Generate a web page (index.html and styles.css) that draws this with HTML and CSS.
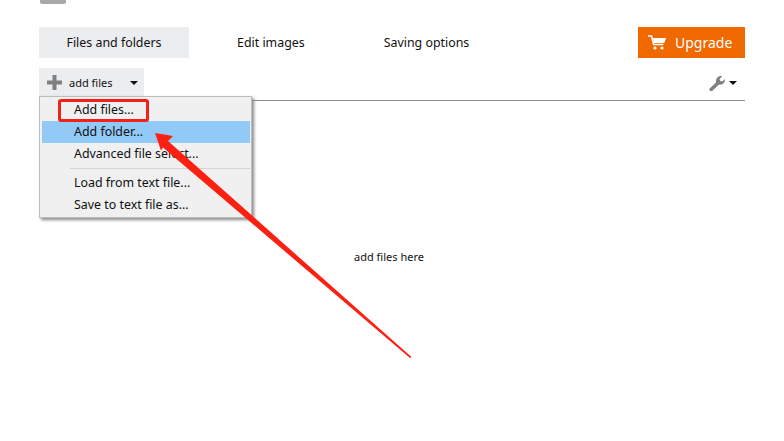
FILE: index.html
```html
<!DOCTYPE html>
<html lang="en">
<head>
    <meta charset="UTF-8">
    <title>Files and folders</title>
    <link rel="stylesheet" href="styles.css">
</head>
<body>
    <div class="container">
        <div class="logo-bit"></div>
        <div class="tabs">
            <div class="tab active">Files and folders</div>
            <div class="tab edit">Edit images</div>
            <div class="tab saving">Saving options</div>
            <div class="upgrade">
                <svg width="19" height="15" viewBox="0 0 19 15">
                    <path d="M0 1h3.500l2.200 8.500h9.600" fill="none" stroke="#fff" stroke-width="1.600"/>
                    <path d="M4.600 3h13.600l-2 5H6z" fill="#fff"/>
                    <circle cx="7" cy="13" r="1.600" fill="#fff"/>
                    <circle cx="14" cy="13" r="1.600" fill="#fff"/>
                </svg>
                <span>Upgrade</span>
            </div>
        </div>
        <div class="toolbar">
            <div class="add-btn">
                <svg class="plus" width="15" height="15" viewBox="0 0 15 15">
                    <path d="M5.500 0h4v5.500H15v4H9.500V15h-4V9.500H0v-4h5.500z" fill="#808080"/>
                </svg>
                <span>add files</span>
                <i class="caret"></i>
            </div>
            <div class="tools">
                <svg width="16" height="16" viewBox="0 0 16 16">
                    <path d="M1 15.500c-.8-.6-1-1.400-.4-2.100L7 7.500C6.500 5 7.500 2.500 9.800 1.500c1.200-.5 2.400-.5 3.300-.1L10.500 4l.8 2 2 .6 2.400-2.500c.4 1.600 0 3.300-1.300 4.500-1.300 1.100-3 1.400-4.500.9l-6.500 6.200c-.7.600-1.600.8-2.400.3z" fill="#808080"/>
                </svg>
                <i class="caret"></i>
            </div>
        </div>
        <div class="drop-area">add files here</div>

        <div class="menu">
            <div class="menu-item">Add files...</div>
            <div class="menu-item selected">Add folder...</div>
            <div class="menu-item">Advanced file select...</div>
            <div class="menu-sep"></div>
            <div class="menu-item">Load from text file...</div>
            <div class="menu-item">Save to text file as...</div>
        </div>

        <!-- annotation on top of the screenshot -->
        <div class="red-box"></div>
        <svg class="arrow" width="784" height="441" viewBox="0 0 784 441">
            <polygon points="155,133 173,136 168,141 411.500,357 410,358 163,147.500 161,150.500" fill="#fb2012"/>
        </svg>
    </div>
</body>
</html>
```

FILE: styles.css
```css
body {
    margin: 0;
    background-color: #fff;
    color: #111;
    font-family: "Noto Sans", "Open Sans", sans-serif;
    font-size: 12px;
}

.container {
    position: relative;
    width: 784px;
    height: 441px;
    overflow: hidden;
    padding: 0 39px;
    box-sizing: border-box;
}

.logo-bit {
    width: 26px;
    height: 4px;
    background-color: #a9a9a9;
    border-radius: 0 0 2px 2px;
    margin-left: 1px;
}

/* 顶部标签 */
.tabs {
    display: flex;
    align-items: stretch;
    height: 31px;
    margin-top: 23px;
}

.tab {
    display: flex;
    align-items: center;
    justify-content: center;
    font-size: 12.4px;
}

.tab.active {
    width: 150px;
    background-color: #ecedef;
}

.tab.edit {
    margin-left: 48px;
}

.tab.saving {
    margin-left: 79px;
}

.upgrade {
    display: flex;
    align-items: center;
    gap: 8px;
    width: 107px;
    box-sizing: border-box;
    padding-left: 10px;
    margin-left: auto;
    background-color: #f06800;
    color: #fff;
    font-size: 14px;
}

/* 工具栏 */
.toolbar {
    display: flex;
    justify-content: space-between;
    height: 32px;
    margin-top: 10px;
    border-bottom: 1px solid #8c8c8c;
}

.add-btn {
    display: flex;
    align-items: center;
    width: 105px;
    height: 29px;
    box-sizing: border-box;
    padding-left: 8px;
    background-color: #ecedef;
    font-size: 11px;
}

.add-btn span {
    margin-left: 7px;
}

.add-btn .caret {
    margin-left: 17px;
}

.caret {
    width: 0;
    height: 0;
    border-left: 4px solid transparent;
    border-right: 4px solid transparent;
    border-top: 4px solid #111;
}

.tools {
    display: flex;
    align-items: center;
    gap: 4px;
    height: 29px;
    padding-right: 8px;
}

.drop-area {
    margin-top: 149px;
    padding-right: 6px;
    text-align: center;
    font-size: 11px;
    line-height: 14px;
}

/* 下拉菜单 */
.menu {
    position: absolute;
    left: 39px;
    top: 96px;
    width: 209px;
    height: 118px;
    padding: 2px 0 0 2px;
    background-color: #f0f0f0;
    border: 1px solid #bdbdbd;
    box-shadow: 2px 2px 3px #8a8a8a;
}

.menu-item {
    height: 22px;
    line-height: 22px;
    padding-left: 32px;
    margin-right: 1px;
    font-size: 12.4px;
}

.menu-item.selected {
    background-color: #91c9f7;
}

.menu-sep {
    height: 1px;
    margin: 3px 1px 3px 28px;
    background-color: #d4d4d4;
}

.red-box {
    position: absolute;
    left: 58px;
    top: 99px;
    width: 85px;
    height: 17px;
    border: 3px solid #f5201a;
    border-radius: 3px;
}

.arrow {
    position: absolute;
    left: 0;
    top: 0;
}
```
